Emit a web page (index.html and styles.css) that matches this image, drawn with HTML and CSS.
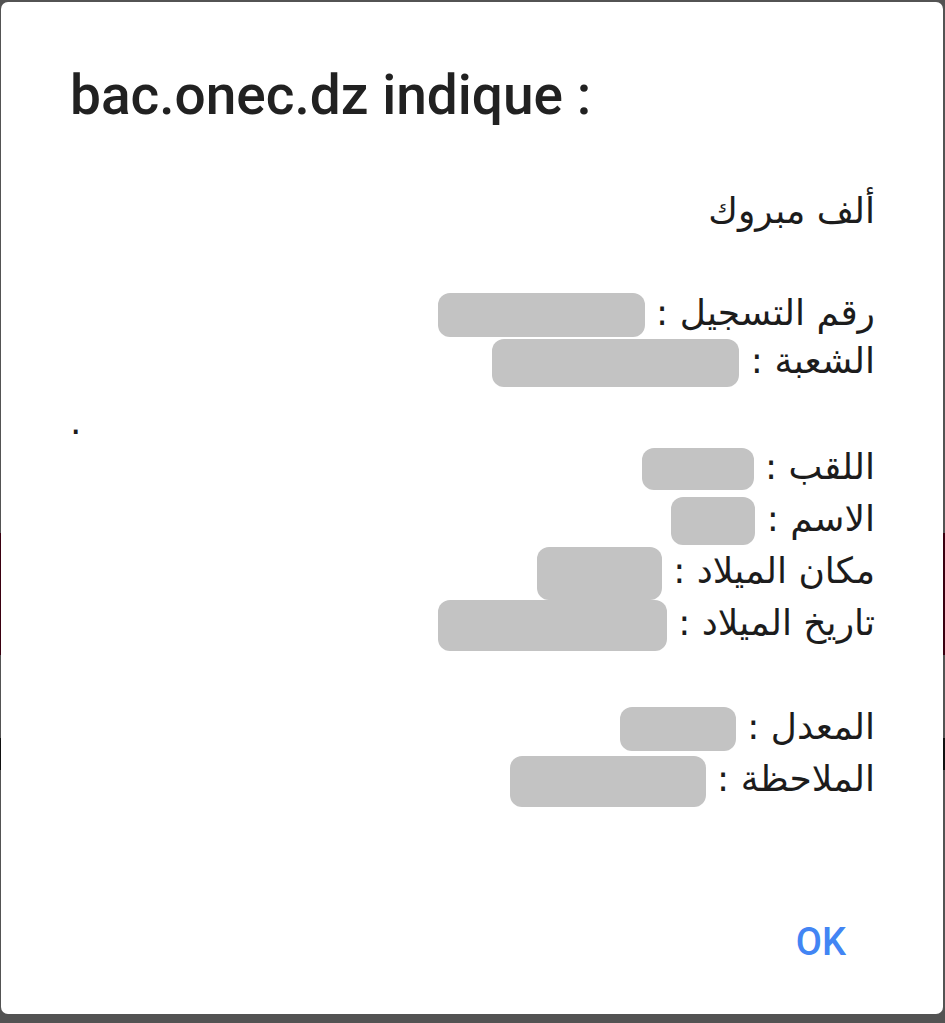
FILE: index.html
```html
<!DOCTYPE html>
<html lang="fr">
  <head>
    <meta charset="UTF-8" />
    <meta name="viewport" content="width=device-width, initial-scale=1.0" />
    <title>bac.onec.dz</title>
    <link rel="stylesheet" href="styles.css">
  </head>
  <body>
    <div class="dialog">
      <h1 class="title">bac.onec.dz indique :</h1>

      <div class="message">
        <p class="line">ألف مبروك</p>
        <p class="line"></p>
        <p class="line short">رقم التسجيل : <span class="mask mask-reg"></span></p>
        <p class="line short">الشعبة : <span class="mask mask-branch"></span></p>
        <p class="line dot" dir="ltr">.</p>
        <p class="line">اللقب : <span class="mask mask-last"></span></p>
        <p class="line">الاسم : <span class="mask mask-first"></span></p>
        <p class="line">مكان الميلاد : <span class="mask mask-place"></span></p>
        <p class="line">تاريخ الميلاد : <span class="mask mask-date"></span></p>
        <p class="line"></p>
        <p class="line">المعدل : <span class="mask mask-avg"></span></p>
        <p class="line">الملاحظة : <span class="mask mask-note"></span></p>
      </div>

      <div class="actions">
        <button type="button" class="ok-btn">OK</button>
      </div>
    </div>
  </body>
</html>
```

FILE: styles.css
```css
html,
body {
  height: 100%;
}

body {
  margin: 0;
  background: #535353;
  background-image: linear-gradient(
    to bottom,
    transparent 533px,
    #3a0010 533px,
    #3a0010 655px,
    transparent 655px,
    transparent 738px,
    #111 738px,
    #111 770px,
    transparent 770px
  );
  padding: 2px 2px 9px 1px;
  box-sizing: border-box;
}

.dialog {
  height: 100%;
  background: #fff;
  border-radius: 7px;
  box-sizing: border-box;
  padding: 0 68px 0 69px;
  display: flex;
  flex-direction: column;
}

.title {
  margin: 0;
  padding-top: 63px;
  font-family: Roboto, "Liberation Sans", sans-serif;
  font-weight: 500;
  font-size: 55px;
  line-height: 60px;
  color: #212121;
}

.message {
  direction: rtl;
  margin-top: 60px;
  font-family: "DejaVu Sans", sans-serif;
  font-size: 36px;
  color: #1c1c1c;
}

.line {
  margin: 0;
  height: 52px;
  line-height: 52px;
  white-space: pre;
}

.line.short {
  height: 48px;
  line-height: 48px;
}

.dot {
  direction: ltr;
  text-align: left;
}

.line.dot {
  height: 56px;
  line-height: 74px;
}

.mask {
  display: inline-block;
  vertical-align: middle;
  height: 46px;
  background: #c3c3c3;
  border-radius: 12px;
}

.mask-reg { width: 207px; height: 44px; }
.mask-branch { width: 247px; height: 48px; }
.mask-last { width: 112px; height: 42px; }
.mask-first { width: 84px; height: 48px; }
.mask-place { width: 125px; height: 53px; }
.mask-date { width: 229px; height: 51px; }
.mask-avg { width: 116px; height: 44px; }
.mask-note { width: 196px; height: 51px; }

.actions {
  margin-top: auto;
  display: flex;
  justify-content: flex-end;
  padding-bottom: 40px;
}

.ok-btn {
  border: none;
  background: none;
  padding: 10px 29px 10px 26px;
  font-family: Roboto, "Liberation Sans", sans-serif;
  font-weight: 500;
  font-size: 38px;
  color: #4285f4;
  cursor: pointer;
}
```
